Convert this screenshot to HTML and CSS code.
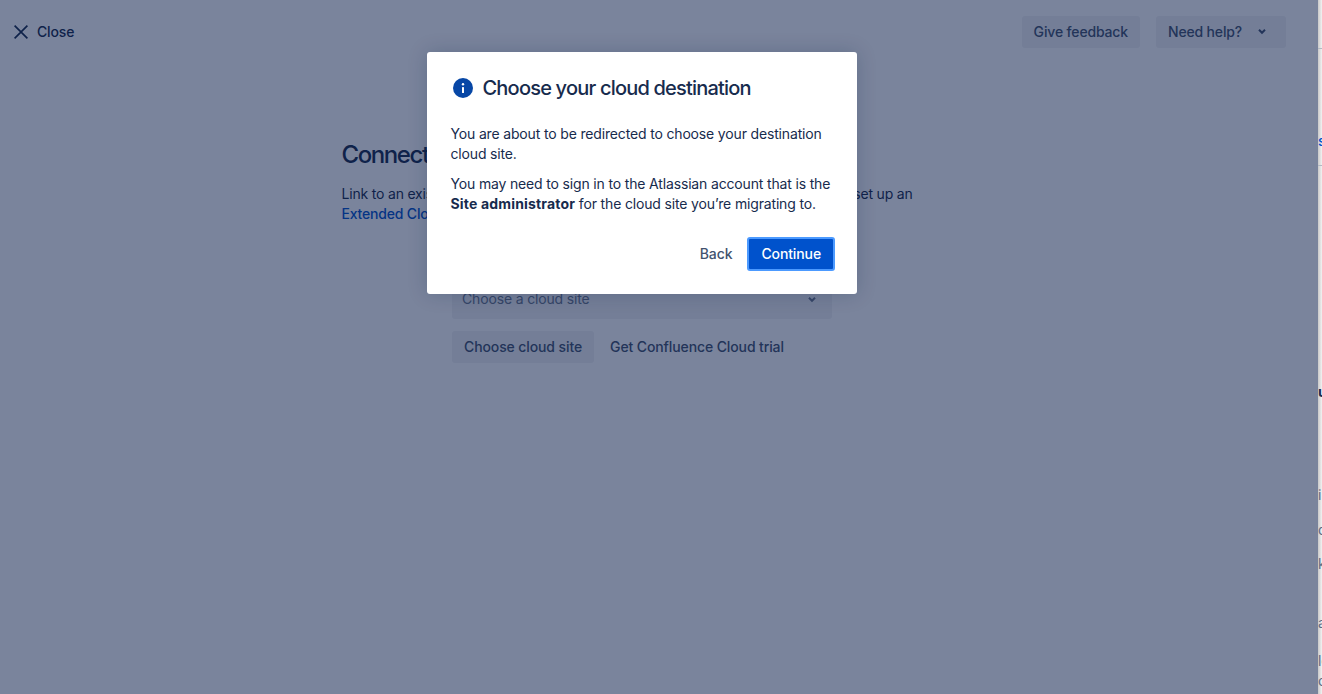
FILE: index.html
```html
<!DOCTYPE html>
<html lang="en">
<head>
    <meta charset="UTF-8">
    <title>Choose your cloud destination</title>
    <link rel="stylesheet" href="styles.css">
</head>
<body>
    <div class="app">
        <div class="wizard">
            <header class="top-bar">
                <a class="close-link">
                    <svg class="close-icon" width="14" height="14" viewBox="0 0 14 14"><path d="M0.6 0.6L13.4 13.4M13.4 0.6L0.6 13.4"/></svg>
                    Close
                </a>
                <div class="top-actions">
                    <button class="btn btn-subtle">Give feedback</button>
                    <button class="btn btn-subtle btn-help">
                        Need help?
                        <svg class="chevron" width="10" height="7" viewBox="0 0 10 7"><path d="M2 1.8L5 4.8L8 1.8"/></svg>
                    </button>
                </div>
            </header>

            <main class="connect">
                <h1 class="connect-title">Connect to Confluence Cloud</h1>
                <p class="connect-text">Link to an existing cloud site or start a new trial. If you need more time to move, set up an<br><a class="link">Extended Cloud Trial</a></p>
                <div class="connect-form">
                    <div class="select">
                        <span>Choose a cloud site</span>
                        <svg class="chevron" width="10" height="7" viewBox="0 0 10 7"><path d="M2 1.8L5 4.8L8 1.8"/></svg>
                    </div>
                    <div class="form-actions">
                        <button class="btn btn-subtle">Choose cloud site</button>
                        <button class="btn btn-plain">Get Confluence Cloud trial</button>
                    </div>
                </div>
            </main>

            <div class="blanket">
                <section class="modal">
                    <div class="modal-head">
                        <svg class="info-icon" width="24" height="24" viewBox="0 0 24 24">
                            <circle cx="12" cy="12" r="10" fill="#0747a6"/>
                            <rect x="11" y="11" width="2" height="6" rx="0.6" fill="#fff"/>
                            <circle cx="12" cy="8.2" r="1.2" fill="#fff"/>
                        </svg>
                        <h2 class="modal-title">Choose your cloud destination</h2>
                    </div>
                    <p class="modal-text">You are about to be redirected to choose your destination cloud site.</p>
                    <p class="modal-text">You may need to sign in to the Atlassian account that is the <strong>Site administrator</strong> for the cloud site you’re migrating to.</p>
                    <div class="modal-actions">
                        <button class="btn btn-back">Back</button>
                        <button class="btn btn-primary">Continue</button>
                    </div>
                </section>
            </div>
        </div>

        <aside class="peek">
            <div class="peek-row peek-rule"></div>
            <div class="peek-row peek-link">s</div>
            <div class="peek-row peek-rule peek-rule-2"></div>
            <div class="peek-row peek-bold">u</div>
            <div class="peek-row peek-i">i</div>
            <div class="peek-row peek-d">d</div>
            <div class="peek-row peek-k">k</div>
            <div class="peek-row peek-a">a</div>
            <div class="peek-row peek-l">le</div>
            <div class="peek-row peek-c">c</div>
        </aside>
    </div>
</body>
</html>
```

FILE: styles.css
```css
* {
    box-sizing: border-box;
}
html, body {
    height: 100%;
}
body {
    margin: 0;
    font-family: Inter, "Liberation Sans", sans-serif;
    font-size: 14px;
    line-height: 20px;
    letter-spacing: -0.16px;
    color: #172b4d;
    overflow: hidden;
}
.app {
    display: flex;
    height: 694px;
}
.wizard {
    position: relative;
    width: 1318px;
    flex: none;
    background: #fff;
}

/* top bar */
.top-bar {
    display: flex;
    justify-content: space-between;
    align-items: center;
    padding: 16px 32px 0 14px;
}
.close-link {
    display: flex;
    align-items: center;
    gap: 9px;
    font-weight: 500;
    color: #172b4d;
}
.close-icon path {
    fill: none;
    stroke: #172b4d;
    stroke-width: 1.7;
}
.top-actions {
    display: flex;
    gap: 16px;
}
.btn {
    height: 32px;
    padding: 0 12px 1px;
    border: none;
    border-radius: 3px;
    font-family: inherit;
    font-size: 14px;
    font-weight: 500;
    letter-spacing: -0.11px;
    color: #42526e;
    background: none;
}
.top-actions .btn {
    letter-spacing: -0.16px;
}
.btn-subtle {
    background: #f1f2f4;
}
.btn-help {
    display: flex;
    align-items: center;
    gap: 15px;
    padding-right: 19px;
}
.chevron path {
    fill: none;
    stroke: currentColor;
    stroke-width: 2;
}

/* page behind the dialog */
.connect {
    padding: 93px 0 0 341.5px;
}
.connect-title {
    margin: 0;
    font-size: 24px;
    line-height: 28px;
    font-weight: 500;
    letter-spacing: -1.4px;
}
.connect-text {
    margin: 15px 0 0;
    white-space: nowrap;
    letter-spacing: -0.19px;
}
.link {
    color: #0052cc;
    font-weight: 500;
}
.connect-form {
    width: 380px;
    margin: 55px 0 0 110.5px;
}
.select {
    display: flex;
    justify-content: space-between;
    align-items: center;
    height: 40px;
    padding: 0 15px 0 10px;
    border-radius: 3px;
    background: #f1f2f4;
    color: #6b778c;
}
.form-actions {
    display: flex;
    gap: 4px;
    margin-top: 12px;
}

/* dialog */
.blanket {
    position: absolute;
    inset: 0;
    padding: 52px 0 0 427px;
    background: rgba(9, 28, 72, 0.54);
}
.modal {
    width: 430px;
    height: 242px;
    padding: 24px 23px 0 23.5px;
    border-radius: 3px;
    background: #fff;
    box-shadow: 0 0 20px rgba(9, 30, 66, 0.2);
}
.modal-head {
    display: flex;
    align-items: center;
    gap: 8px;
    margin-bottom: 24px;
}
.info-icon {
    flex: none;
}
.modal-title {
    margin: 0;
    font-size: 20px;
    line-height: 24px;
    font-weight: 500;
    letter-spacing: -0.8px;
}
.modal-text {
    margin: 0 0 10px;
}
.modal-text strong {
    letter-spacing: 0.17px;
}
.modal-actions {
    display: flex;
    justify-content: flex-end;
    align-items: center;
    gap: 3px;
    margin: 23px -1px 0 0;
}
.btn-primary {
    height: 34px;
    padding: 0 12px 1px;
    border: 2px solid #4c9aff;
    color: #fff;
    background: #0052cc;
}

/* next page showing past the wizard edge */
.peek {
    flex: 1;
    overflow: hidden;
    background: linear-gradient(to right, #c9c9c9, #f2f2f2);
}
.peek-row {
    height: 20px;
    white-space: nowrap;
}
.peek-rule {
    height: 1px;
    margin-top: 48px;
    background: #b3b9c4;
}
.peek-rule-2 {
    margin-top: 14px;
}
.peek-link {
    margin-top: 82px;
    font-weight: 500;
    color: #0052cc;
}
.peek-bold {
    margin-top: 216px;
    font-weight: 700;
    color: #172b4d;
}
.peek-i {
    margin-top: 83px;
    color: #5e6c84;
}
.peek-d {
    margin-top: 15px;
    color: #5e6c84;
}
.peek-k {
    margin-top: 14px;
    color: #5e6c84;
}
.peek-a {
    margin-top: 39px;
    color: #5e6c84;
}
.peek-l {
    margin-top: 18px;
    color: #5e6c84;
}
.peek-c {
    color: #5e6c84;
}
```
